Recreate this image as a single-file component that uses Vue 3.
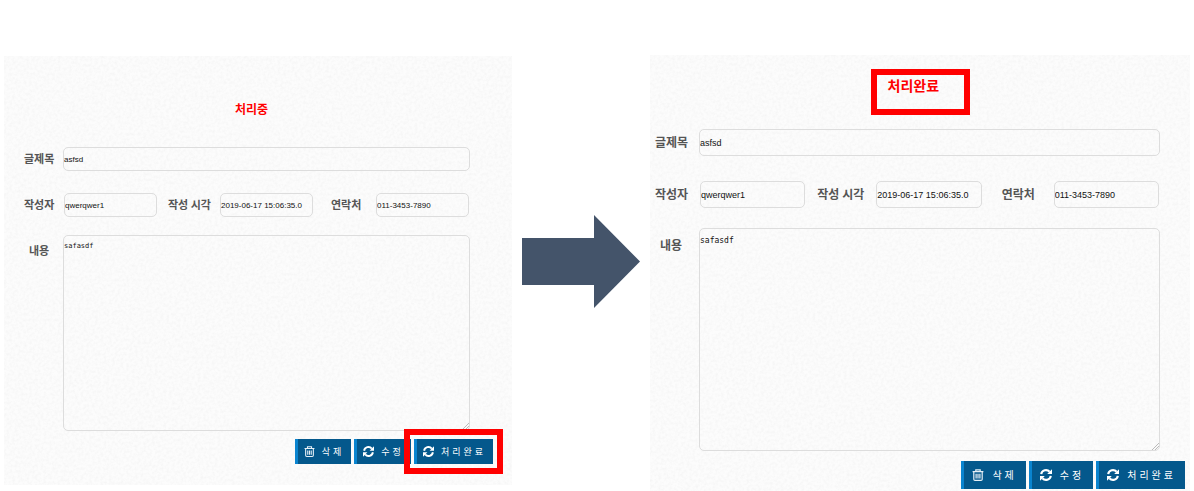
<script setup>
const trash = 'trash'
const refresh = 'refresh'

const post = {
  title: 'asfsd',
  writer: 'qwerqwer1',
  time: '2019-06-17 15:06:35.0',
  phone: '011-3453-7890',
  body: 'safasdf',
}

const panels = [
  { id: 'before', status: '처리중', markStatus: false, markDone: true },
  { id: 'after', status: '처리완료', markStatus: true, markDone: false },
]

const actions = [
  { label: '삭제', icon: trash },
  { label: '수정', icon: refresh },
  { label: '처리완료', icon: refresh, done: true },
]
</script>

<template>
  <main class="page">
    <template v-for="panel in panels" :key="panel.id">
      <svg v-if="panel.id === 'after'" class="arrow" viewBox="0 0 118 93" aria-hidden="true">
        <polygon points="0,23 72,23 72,0 118,46.5 72,93 72,70 0,70" fill="#44546a" />
      </svg>
      <form class="panel" :class="panel.id" @submit.prevent>
        <svg class="paper" aria-hidden="true">
          <filter :id="panel.id + '-grain'" x="0" y="0" width="100%" height="100%">
            <feTurbulence type="fractalNoise" baseFrequency="0.35" numOctaves="3" stitchTiles="stitch" />
            <feColorMatrix type="matrix" values="0 0 0 0 0  0 0 0 0 0  0 0 0 0 0  0.05 0 0 0 -0.018" />
          </filter>
          <rect width="100%" height="100%" :filter="'url(#' + panel.id + '-grain)'" />
        </svg>

        <h2 class="status" :class="{ marked: panel.markStatus }">{{ panel.status }}</h2>

        <div class="row title-row">
          <label :for="panel.id + '-title'">글제목</label>
          <input :id="panel.id + '-title'" type="text" :value="post.title" />
        </div>

        <div class="row meta-row">
          <label :for="panel.id + '-writer'">작성자</label>
          <input :id="panel.id + '-writer'" type="text" :value="post.writer" />
          <label class="time-label" :for="panel.id + '-time'">작성 시각</label>
          <input :id="panel.id + '-time'" type="text" :value="post.time" />
          <label class="phone-label" :for="panel.id + '-phone'">연락처</label>
          <input :id="panel.id + '-phone'" type="text" :value="post.phone" />
        </div>

        <div class="row body-row">
          <label :for="panel.id + '-body'">내용</label>
          <textarea :id="panel.id + '-body'" :value="post.body" spellcheck="false"></textarea>
        </div>

        <div class="actions">
          <div v-for="a in actions" :key="a.label" class="action" :class="{ marked: a.done && panel.markDone }">
            <button type="button">
              <svg v-if="a.icon === trash" viewBox="0 0 12 12" fill="none" stroke="#e6eff6" stroke-width="1.2" aria-hidden="true">
                <path d="M0.6 2.7H11.4M3.8 2.5V0.8H8.2V2.5M1.8 2.9V10.2Q1.8 11.4 3 11.4H9Q10.2 11.4 10.2 10.2V2.9M4.1 4.8V9.6M6 4.8V9.6M7.9 4.8V9.6" />
              </svg>
              <svg v-else viewBox="0 0 12 12" aria-hidden="true">
                <g fill="none" stroke="#fff" stroke-width="2.1">
                  <path d="M1.2 5.2A4.8 4.8 0 0 1 9.6 2.8" />
                  <path d="M10.8 6.8A4.8 4.8 0 0 1 2.4 9.2" />
                </g>
                <path d="M12 0.3V5.1H7.2ZM0 11.7V6.9H4.8Z" fill="#fff" />
              </svg>
              <span>{{ a.label }}</span>
            </button>
          </div>
        </div>
      </form>
    </template>
  </main>
</template>

<style>
body {
  background: #fff;
}
</style>

<style scoped>
.page {
  display: grid;
  grid-template-columns: minmax(0, 508fr) 118px minmax(0, 540fr);
  column-gap: 10px;
  align-items: start;
  padding: 55px 4px 0;
  font-family: "Liberation Sans", "Noto Sans CJK KR", sans-serif;
}

.panel {
  position: relative;
  box-sizing: border-box;
  background: #fcfcfc;
}

.before {
  --label: 11px;
  --text: 8px;
  --mono: 7px;
  --field: 24px;
  --title-col: 39px;
  --writer-col: 40px;
  --time-col: 63px;
  --time-pad: 11px;
  --phone-col: 63px;
  --phone-pad: 18px;
  --body-height: 196px;
  --body-pad: 6px;
  --btn-height: 25px;
  --btn-text: 9px;
  --btn-icon: 11px;
  --btn-pad: 0 7px 0 6px;
  --btn-gap: 7px;
  --inset: 23px;
  margin-top: 1px;
  padding: 43px 19px 21px 20px;
}

.after {
  --label: 12px;
  --text: 9px;
  --mono: 8px;
  --field: 27px;
  --title-col: 44px;
  --writer-col: 45px;
  --time-col: 71px;
  --time-pad: 12px;
  --phone-col: 72px;
  --phone-pad: 20px;
  --body-height: 223px;
  --body-pad: 8px;
  --btn-height: 28px;
  --btn-text: 10px;
  --btn-icon: 12px;
  --btn-pad: 0 9px 0 8px;
  --btn-gap: 8px;
  --inset: 25px;
  padding: 14px 5px 2px;
}

.paper {
  position: absolute;
  inset: 0;
  width: 100%;
  height: 100%;
  pointer-events: none;
}

.status,
.row,
.actions {
  position: relative;
}

.status {
  margin: 0 14px 28px 0;
  text-align: center;
  font-family: "Noto Sans CJK KR", sans-serif;
  font-size: 12px;
  line-height: 20px;
  font-weight: 700;
  color: #f00;
}

.status.marked {
  box-sizing: border-box;
  width: 99px;
  height: 46px;
  margin: 0 auto 14px;
  padding: 0 0 0 11px;
  border: 6px solid #f00;
  text-align: left;
  font-size: 14px;
}

.row {
  display: grid;
  margin-right: var(--inset);
}

.title-row {
  grid-template-columns: var(--title-col) minmax(0, 1fr);
  margin-bottom: 22px;
}

.after .title-row {
  margin-bottom: 25px;
}

.meta-row {
  grid-template-columns:
    var(--writer-col) minmax(0, 1fr) var(--time-col) minmax(0, 1fr)
    var(--phone-col) minmax(0, 1fr);
  padding-right: 1px;
  margin-bottom: 18px;
}

.after .meta-row {
  margin-bottom: 20px;
}

.body-row {
  grid-template-columns: var(--title-col) minmax(0, 1fr);
  margin-bottom: 8px;
}

.after .body-row {
  margin-bottom: 10px;
}

label {
  font-family: "Noto Sans CJK KR", sans-serif;
  font-size: var(--label);
  line-height: calc(var(--field) - 2px);
  font-weight: 700;
  color: #555;
  white-space: nowrap;
}

.time-label {
  padding-left: var(--time-pad);
}

.phone-label {
  padding-left: var(--phone-pad);
}

.body-row label {
  padding: 4px 0 0 5px;
}

input,
textarea {
  box-sizing: border-box;
  width: 100%;
  margin: 0;
  padding: 0;
  border: 1px solid #ddd;
  border-radius: 5px;
  outline: 0;
  background: transparent;
  color: #111;
}

input {
  height: var(--field);
  font-family: "Liberation Sans", sans-serif;
  font-size: var(--text);
}

textarea {
  display: block;
  height: var(--body-height);
  padding-top: var(--body-pad);
  font-family: "DejaVu Sans Mono", monospace;
  font-size: var(--mono);
  line-height: 8px;
}

textarea::-webkit-resizer {
  background: linear-gradient(
    135deg,
    transparent 74%,
    #bbb 74%,
    #bbb 78%,
    transparent 78%,
    transparent 86%,
    #bbb 86%,
    #bbb 90%,
    transparent 90%
  );
}

.actions {
  display: flex;
  justify-content: flex-end;
  gap: 3px;
}

.action {
  position: relative;
}

.action.marked::after {
  content: "";
  position: absolute;
  inset: -10px;
  border: 6px solid #f00;
  pointer-events: none;
}

button {
  display: flex;
  align-items: center;
  gap: var(--btn-gap);
  height: var(--btn-height);
  margin: 0;
  padding: var(--btn-pad);
  border: 0;
  border-left: 3px solid #0a84cf;
  background: #04588c;
  color: #fff;
  font-family: "Noto Sans CJK KR", sans-serif;
  font-size: var(--btn-text);
  line-height: 14px;
  letter-spacing: 3px;
  white-space: nowrap;
}

button svg {
  width: var(--btn-icon);
  height: var(--btn-icon);
}

.arrow {
  display: block;
  width: 100%;
  margin-top: 160px;
}
</style>
